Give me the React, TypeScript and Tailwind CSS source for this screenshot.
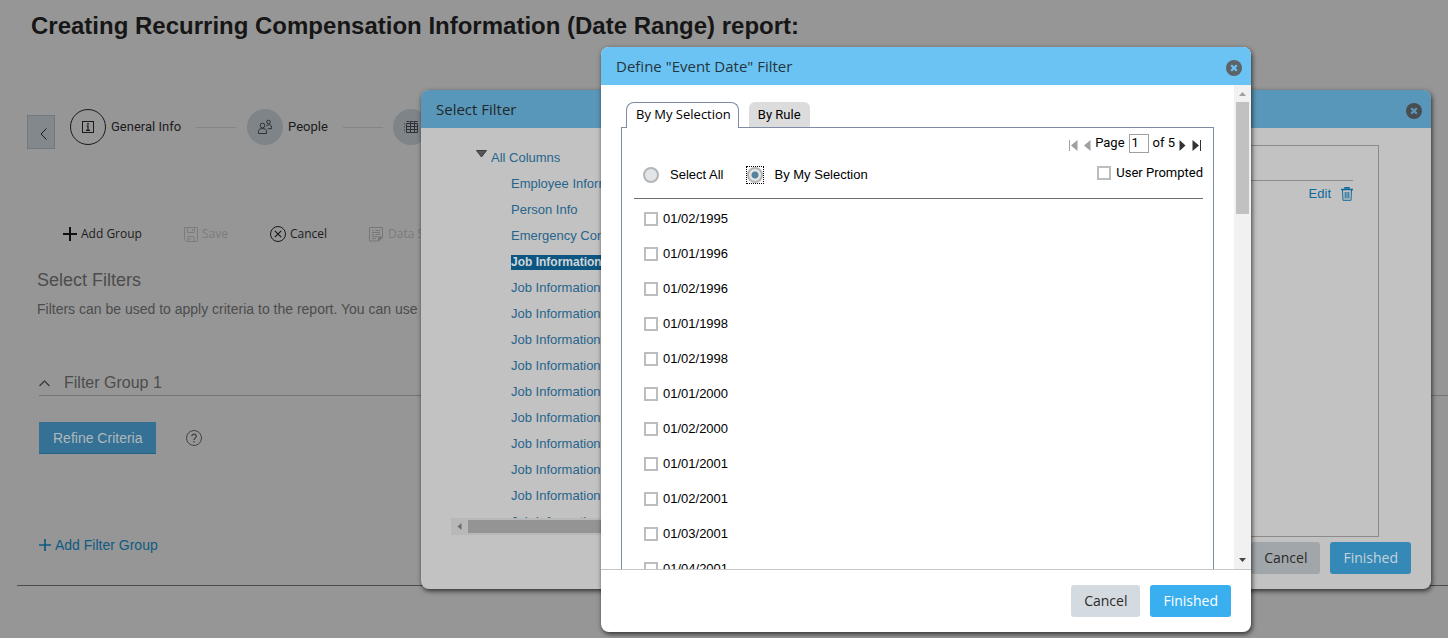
import React, { useState } from "react";

const dates = [
  "01/02/1995",
  "01/01/1996",
  "01/02/1996",
  "01/01/1998",
  "01/02/1998",
  "01/01/2000",
  "01/02/2000",
  "01/01/2001",
  "01/02/2001",
  "01/03/2001",
  "01/04/2001",
];

const columns = [
  "Employee Information",
  "Person Info",
  "Emergency Contact",
  "Job Information",
  "Job Information",
  "Job Information",
  "Job Information",
  "Job Information",
  "Job Information",
  "Job Information",
  "Job Information",
  "Job Information",
  "Job Information",
  "Job Information",
];

const InfoIcon = () => (
  <svg width="14" height="14" viewBox="0 0 14 14" fill="none" stroke="#1a1a1a">
    <rect x="1.5" y="1.5" width="11" height="11" />
    <path d="M5.5 6H7v4M5 10.3h4" strokeWidth="1.2" />
    <circle cx="7" cy="3.9" r="0.9" fill="#1a1a1a" stroke="none" />
  </svg>
);

const PeopleIcon = () => (
  <svg width="16" height="16" viewBox="0 0 16 16" fill="none" stroke="#2b3238">
    <circle cx="5.5" cy="6.5" r="2.3" />
    <path d="M1.5 14.5v-2.2c0-1.7 1.2-2.6 2.6-2.6h2.8c1.4 0 2.6.9 2.6 2.6v2.2z" />
    <circle cx="11.5" cy="3" r="1.8" />
    <path d="M9.2 7.4c.4-1 1-1.6 2.3-1.6h.7c1.5 0 2.3.9 2.3 2.3v1.6h-3.7" />
  </svg>
);

const GridIcon = () => (
  <svg width="16" height="16" viewBox="0 0 16 16" fill="none" stroke="#2b3238">
    <path d="M3.5 4.5h11v9h-11zM3.5 7.5h11M3.5 10.5h11M7.5 2v11.5M11.5 2v11.5" />
    <path d="M3.5 2.5h11" strokeDasharray="3 1" />
    <path d="M1.5 4v10" stroke="#6d5a46" strokeDasharray="2 1" />
  </svg>
);

const SaveIcon = () => (
  <svg width="14" height="15" viewBox="0 0 14 15" fill="none" stroke="#7c7c7c">
    <path d="M.5.5h13v14h-11l-2-2z" />
    <path d="M3.5.5v5h7v-5M8.5 2v2M4 14.5v-5h6v5M6 11v2" />
  </svg>
);

const DataIcon = () => (
  <svg width="15" height="15" viewBox="0 0 15 15" fill="none" stroke="#777777">
    <path d="M.5.5h13v9.5l-4 4h-9z" />
    <path d="M3 3.5h2M6.5 3.5h5M3 5.5h8M3 7.5h2M6.5 7.5h5M3 9.5h6M3 11.5h4" />
    <path d="M9.5 14v-4h4z" fill="#777777" />
  </svg>
);

const TrashIcon = () => (
  <svg width="12" height="14" viewBox="0 0 12 14" fill="none" stroke="#0f6b9c">
    <path d="M0 2.5h12M4 2V.7h4V2" strokeWidth="1.4" />
    <path d="M1.5 3l.5 10.3h8l.5-10.3M4.2 5v6.5M6 5v6.5M7.8 5v6.5" />
  </svg>
);

const CloseIcon = ({ cross, disc }: { cross: string; disc: string }) => (
  <svg width="16" height="16" viewBox="0 0 16 16">
    <circle cx="8" cy="8" r="8" fill={disc} />
    <path d="M5.2 5.2l5.6 5.6M10.8 5.2l-5.6 5.6" stroke={cross} strokeWidth="2.2" />
  </svg>
);

const PlusIcon = ({ size, color }: { size: number; color: string }) => (
  <svg width={size} height={size} viewBox="0 0 14 14" stroke={color} strokeWidth="2">
    <path d="M7 0v14M0 7h14" />
  </svg>
);

const Page = () => (
  <main className="min-h-screen overflow-hidden pt-2 text-[#1c1c1c]">
    <h1 className="ml-[31px] text-2xl leading-9 font-bold text-[#161616]">
      Creating Recurring Compensation Information (Date Range) report:
    </h1>

    <nav className="mt-[65px] ml-[27px] flex items-start font-['Roboto',sans-serif] text-[13px]">
      <button aria-label="Back" className="mt-[6px] flex h-[34px] w-7 items-center justify-end border border-[#76797c] bg-[#83888c] pt-1 pr-[7px]">
        <svg width="7" height="12" viewBox="0 0 7 12" fill="none" stroke="#1a1a1a">
          <path d="M6.5.5L1 6l5.5 5.5" />
        </svg>
      </button>
      <div className="ml-[15px] flex items-center">
        <span className="flex size-9 items-center justify-center rounded-full border border-[#1a1a1a]">
          <InfoIcon />
        </span>
        <a href="#general" className="ml-[5px]">General Info</a>
        <span className="ml-[15px] h-px w-10 bg-[#858585]" />
        <span className="ml-[11px] flex size-9 items-center justify-center rounded-full bg-[#7f8488]">
          <PeopleIcon />
        </span>
        <a href="#people" className="ml-[5px]">People</a>
        <span className="ml-[15px] h-px w-10 bg-[#858585]" />
        <span className="ml-[10px] flex size-9 items-center justify-center rounded-full bg-[#7f8488]">
          <GridIcon />
        </span>
      </div>
    </nav>

    <div className="mt-[75px] ml-[63px] flex h-5 items-center font-['Open_Sans',sans-serif] text-xs">
      <button className="flex w-[121px] items-center gap-1">
        <PlusIcon size={14} color="#111111" />
        Add Group
      </button>
      <button className="flex w-[86px] items-center gap-1 text-[#7c7c7c]">
        <SaveIcon />
        Save
      </button>
      <button className="flex w-[99px] items-center gap-1">
        <svg width="16" height="16" viewBox="0 0 16 16" fill="none" stroke="#1a1a1a">
          <circle cx="8" cy="8" r="7.5" />
          <path d="M4.8 4.8l6.4 6.4M11.2 4.8l-6.4 6.4" strokeWidth="1.2" />
        </svg>
        Cancel
      </button>
      <button className="flex items-center gap-1 text-[#7c7c7c]">
        <DataIcon />
        Data Sort
      </button>
    </div>

    <section className="ml-[37px] text-[#4c4c4c]">
      <h2 className="mt-6 text-lg leading-6">Select Filters</h2>
      <p className="mt-[7px] text-sm leading-5 whitespace-nowrap">
        Filters can be used to apply criteria to the report. You can use multiple filters.
      </p>
      <div className="mt-[53px] ml-[2px] flex h-6 items-center gap-[14px] border-b border-[#757575] pb-px">
        <svg width="11" height="7" viewBox="0 0 11 7" fill="none" stroke="#3c3c3c" strokeWidth="1.3">
          <path d="M.5 6l5-5 5 5" />
        </svg>
        <h3 className="text-base leading-6">Filter Group 1</h3>
      </div>
      <div className="mt-[26px] ml-[2px] flex items-center gap-[30px]">
        <button className="h-8 border-b border-[#1f6288] bg-[#357194] px-[14px] text-sm text-[#b0b8bc]">Refine Criteria</button>
        <svg width="16" height="16" viewBox="0 0 16 16" fill="none" stroke="#444444">
          <circle cx="8" cy="8" r="7.5" />
          <path d="M5.8 6.3c0-3 4.4-2.8 4.4 0C10.2 8 8 8 8 10M8 11v1.4" strokeWidth="1.3" />
        </svg>
      </div>
      <a href="#add" className="mt-[81px] ml-[2px] flex h-5 items-center gap-1 text-sm text-[#105a82]">
        <PlusIcon size={12} color="#105a82" />
        Add Filter Group
      </a>
    </section>
    <hr className="mt-[30px] ml-[17px] border-[#4c4c4c]" />
  </main>
);

const SelectFilter = () => (
  <div
    role="dialog"
    aria-label="Select Filter"
    className="absolute top-[90px] right-[17px] left-[421px] flex h-[499px] flex-col overflow-hidden rounded-lg bg-[#c2c2c2] shadow-[1px_2px_5px_rgba(0,0,0,0.7)]"
  >
    <header className="flex h-[38px] shrink-0 items-center justify-between bg-[#5997ba] pr-[9px] pl-[15px] font-['Open_Sans',sans-serif]">
      <h2 className="text-[15px] text-[#20272b]">Select Filter</h2>
      <button aria-label="Close" className="mt-1">
        <CloseIcon cross="#5997ba" disc="#4a4d4f" />
      </button>
    </header>
    <div className="flex items-start justify-between pr-[52px] pl-[30px]">
      <div className="mt-[17px] h-[390px] w-[300px] overflow-hidden">
        <div className="flex h-[373px] flex-col overflow-hidden pl-[25px] text-[13px] text-[#27648c]">
          <a href="#all" className="flex h-[26px] shrink-0 items-center">
            <svg width="11" height="8" viewBox="0 0 11 8" className="mr-1 mb-2">
              <path d="M.5.5h10l-5 6.5z" fill="#555555" stroke="#3e3e3e" />
            </svg>
            All Columns
          </a>
          {columns.map((name, i) => (
            <a key={i} href="#column" className="ml-[35px] flex h-[26px] shrink-0 items-center whitespace-nowrap">
              <span className={i === 3 ? "bg-[#0d5681] text-xs leading-[15px] font-bold text-[#cfd6da]" : ""}>{name}</span>
            </a>
          ))}
        </div>
        <div className="flex h-[17px] items-center bg-[#b8b8b8]">
          <svg width="17" height="9" viewBox="0 0 17 9">
            <path d="M10.5 1v7l-4-3.5z" fill="#6c6c6c" />
          </svg>
          <span className="h-[13px] flex-1 bg-[#949494]" />
        </div>
      </div>
      <div className="mt-[17px] flex h-[392px] w-[400px] flex-col items-end border border-[#8b8b8b] pr-[25px]">
        <div className="h-[35px] w-full border-b border-[#8b8b8b]" />
        <div className="mt-[3px] flex items-center gap-[10px] text-[13px] text-[#0f6b9c]">
          <a href="#edit">Edit</a>
          <button aria-label="Delete">
            <TrashIcon />
          </button>
        </div>
      </div>
    </div>
    <footer className="mt-[5px] flex justify-end gap-[10px] pr-5 font-['Open_Sans',sans-serif] text-sm">
      <button className="h-8 rounded-[3px] bg-[#a0a6aa] px-[13px] text-[#2b2b2b]">Cancel</button>
      <button className="h-8 rounded-[3px] bg-[#3589b7] px-[13px] text-[#c5d3db]">Finished</button>
    </footer>
  </div>
);

const EventDateFilter = () => {
  const [mode, setMode] = useState("selection");

  return (
    <div
      role="dialog"
      aria-label="Define Event Date Filter"
      className="absolute top-[47px] right-[197px] flex h-[585px] w-[650px] flex-col overflow-hidden rounded-lg bg-white shadow-[1px_2px_5px_rgba(0,0,0,0.7)]"
    >
      <header className="flex h-[38px] shrink-0 items-center justify-between bg-[#6ac3f3] pr-[9px] pl-[15px] font-['Open_Sans',sans-serif]">
        <h2 className="text-[15px] text-[#26343d]">Define "Event Date" Filter</h2>
        <button aria-label="Close" className="mt-1">
          <CloseIcon cross="#6ac3f3" disc="#5d6366" />
        </button>
      </header>

      <div className="flex min-h-0 flex-1 border-b border-[#c6c6c6] text-[13px] text-black">
        <div className="flex min-w-0 flex-1 flex-col overflow-hidden pt-[17px] pr-5 pl-5">
          <div role="tablist" className="z-10 -mb-px flex gap-[10px] pl-[5px]">
            <button role="tab" aria-selected="true" className="h-[26px] rounded-t-lg border border-b-0 border-[#7d8ba3] bg-white pr-[7px] pb-[2px] pl-[9px] font-['Open_Sans',sans-serif]">
              By My Selection
            </button>
            <button role="tab" aria-selected="false" className="mb-px h-[25px] rounded-t-md bg-[#dcdcdc] px-[9px] font-['Roboto',sans-serif]">
              By Rule
            </button>
          </div>
          <div className="flex min-h-0 flex-1 flex-col border border-b-0 border-[#7d8ba3] pt-1 pr-[10px] pl-3 font-['Roboto',sans-serif]">
            <div className="flex shrink-0 items-center justify-between border-b border-[#6f6f6f] pb-[13px]">
              <div className="mt-[33px] flex items-center pl-[9px] font-['Liberation_Sans',sans-serif]">
                <label className="flex items-center gap-[11px]">
                  <input
                    type="radio"
                    name="mode"
                    checked={mode === "all"}
                    onChange={() => setMode("all")}
                    className="size-4 appearance-none rounded-full border-2 border-[#b5b5b5] bg-[#e3e6e8]"
                  />
                  Select All
                </label>
                <label className="ml-[23px] flex items-center gap-[10px]">
                  <span className="flex border border-dotted border-black">
                    <input
                      type="radio"
                      name="mode"
                      checked={mode === "selection"}
                      onChange={() => setMode("selection")}
                      className="size-4 appearance-none rounded-full border-2 border-[#b5b5b5] bg-[#e3e6e8] checked:bg-[radial-gradient(circle,#56839b_3px,#e3e6e8_4px)]"
                    />
                  </span>
                  By My Selection
                </label>
              </div>
              <div className="flex flex-col items-end gap-[9px] self-start">
                <div className="flex h-[22px] items-center">
                  <button aria-label="First page" className="mt-1">
                    <svg width="9" height="11" viewBox="0 0 9 11">
                      <path d="M.5 0v11" stroke="#a0a0a0" />
                      <path d="M8.5 0v11L2 5.5z" fill="#a0a0a0" />
                    </svg>
                  </button>
                  <button aria-label="Previous page" className="mt-1 ml-[6px]">
                    <svg width="7" height="11" viewBox="0 0 7 11">
                      <path d="M6.5 0v11L0 5.5z" fill="#a0a0a0" />
                    </svg>
                  </button>
                  <label className="ml-1 flex items-center gap-1">
                    Page
                    <input type="text" defaultValue="1" className="h-[19px] w-5 border border-[#a0a0a0] pl-[2px]" />
                  </label>
                  <span className="ml-1">of 5</span>
                  <button aria-label="Next page" className="mt-1 ml-1">
                    <svg width="7" height="11" viewBox="0 0 7 11">
                      <path d="M.5 0v11l6-5.5z" fill="#333333" />
                    </svg>
                  </button>
                  <button aria-label="Last page" className="mt-1 mr-[2px] ml-[6px]">
                    <svg width="9" height="11" viewBox="0 0 9 11">
                      <path d="M8.5 0v11" stroke="#333333" />
                      <path d="M.5 0v11L7 5.5z" fill="#333333" />
                    </svg>
                  </button>
                </div>
                <label className="flex items-center gap-[5px]">
                  <input type="checkbox" className="size-[14px] appearance-none border-2 border-[#bdbdbd] bg-white" />
                  User Prompted
                </label>
              </div>
            </div>
            <ul className="shrink-0 pl-[10px] font-['Liberation_Sans',sans-serif]">
              {dates.map((date) => (
                <li key={date} className="flex h-[35px] items-center pt-[5px]">
                  <label className="flex items-center gap-[5px]">
                    <input type="checkbox" className="size-[14px] appearance-none border-2 border-[#bdbdbd] bg-white" />
                    {date}
                  </label>
                </li>
              ))}
            </ul>
          </div>
        </div>
        <div className="flex w-[17px] flex-col items-center bg-[#f1f1f1]">
          <svg width="17" height="17" viewBox="0 0 17 17">
            <path d="M5 11h7L8.5 7z" fill="#a0a0a0" />
          </svg>
          <span className="h-28 w-[13px] bg-[#c1c1c1]" />
          <svg width="17" height="17" viewBox="0 0 17 17" className="mt-auto">
            <path d="M5 6h7l-3.5 4z" fill="#444444" />
          </svg>
        </div>
      </div>

      <footer className="flex h-[62px] shrink-0 items-center justify-end gap-[10px] pr-5 font-['Open_Sans',sans-serif] text-sm">
        <button className="h-8 rounded-[3px] bg-[#d3dae0] px-[13px] text-[#2b2b2b]">Cancel</button>
        <button className="h-8 rounded-[3px] bg-[#3aaff0] px-[13px] text-white">Finished</button>
      </footer>
    </div>
  );
};

const App = () => {
  return (
    <div className="relative min-h-screen overflow-hidden bg-[#969696] font-['Liberation_Sans',sans-serif]">
      <Page />
      <SelectFilter />
      <EventDateFilter />
    </div>
  );
};

export default App;
